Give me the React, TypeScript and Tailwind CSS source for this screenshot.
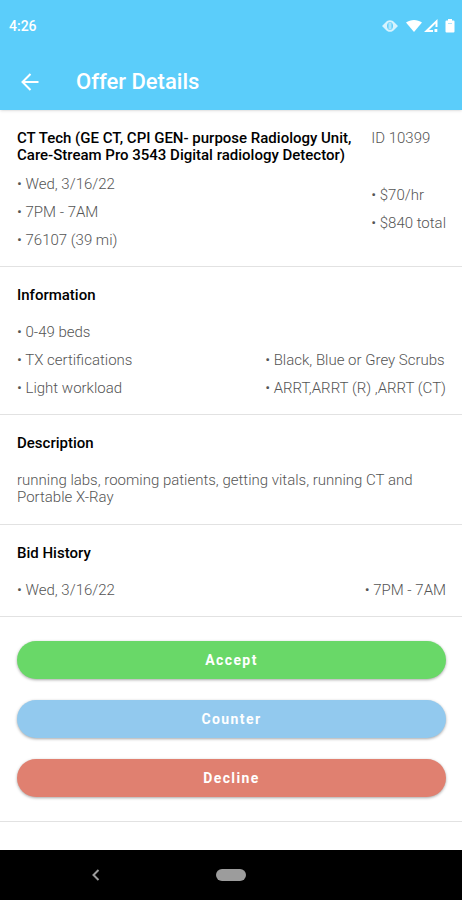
import type { ReactNode } from 'react';
import clsx from 'clsx';

const actions = [
  { label: 'Accept', color: 'bg-[#69d868]' },
  { label: 'Counter', color: 'bg-[#92c9ee]' },
  { label: 'Decline', color: 'bg-[#e08070]' },
];

function BulletList({ items, className }: { items: string[]; className?: string }) {
  return (
    <ul className={clsx('leading-7', className)}>
      {items.map((item) => (
        <li key={item}>• {item}</li>
      ))}
    </ul>
  );
}

function Section({ title, children }: { title: string; children: ReactNode }) {
  return (
    <section className="border-b border-[#e2e2e2] pt-5 pr-4 pb-3 pl-[17px]">
      <h2 className="mb-3.5 font-medium text-black">{title}</h2>
      {children}
    </section>
  );
}

function StatusBar() {
  return (
    <div className="flex items-center justify-between pt-4 pr-1.5 pl-[9px]">
      <span className="text-sm font-medium">4:26</span>
      <div className="flex items-center">
        <svg className="mr-2 h-4 w-4" viewBox="0 0 16 16" fill="currentColor" aria-hidden="true">
          <path
            fillRule="evenodd"
            d="M0 8l3.500-3.500C4.800 3 6.200 2.200 8 2.200s3.200.8 4.500 2.300L16 8l-3.500 3.500C11.200 13 9.800 13.800 8 13.800s-3.200-.8-4.500-2.300zM8 4C6 4 5 5.800 5 8s1 4 3 4 3-1.800 3-4-1-4-3-4z"
            opacity=".75"
          />
          <path d="M6.500 4.500h3v7h-3z" opacity=".5" />
        </svg>
        <svg className="mr-0.5 h-4 w-4" viewBox="0 0 16 16" fill="currentColor" aria-hidden="true">
          <path d="M0 4.500C4.600 1 11.400 1 16 4.500L8 14z" />
        </svg>
        <svg className="mr-1.5 h-4 w-3.5" viewBox="0 0 14 16" fill="currentColor" aria-hidden="true">
          <path fillRule="evenodd" d="M13.500 1v8h-2V5.500L5 12h4v2H0zM10.500 11h2.800v3h-2.800z" />
        </svg>
        <svg className="h-4 w-3" viewBox="0 0 12 16" fill="currentColor" aria-hidden="true">
          <path d="M4 1h4v1.500h1.500q1 0 1 1v10q0 1-1 1h-7q-1 0-1-1v-10q0-1 1-1H4z" />
          <path d="M4 5h4v1H4z" fill="#5bcdfa" opacity=".5" />
        </svg>
      </div>
    </div>
  );
}

export default function App() {
  return (
    <div className="flex min-h-screen flex-col bg-white font-['Roboto',sans-serif] text-[15px] leading-[17px] font-light text-[#555555]">
      <header className="bg-[#5bcdfa] pb-3 text-white shadow-sm">
        <StatusBar />
        <div className="mt-[30px] flex items-center px-4">
          <button type="button" aria-label="Back" className="flex h-8 w-7 items-center justify-center">
            <svg className="h-[18px] w-[18px]" viewBox="0 0 18 18" fill="none" stroke="currentColor" strokeWidth="2" aria-hidden="true">
              <path d="M17.500 9H2M9.500 1L1.500 9l8 8" />
            </svg>
          </button>
          <h1 className="ml-8 text-[22px] leading-8 font-medium">Offer Details</h1>
        </div>
      </header>

      <main className="flex-1">
        <section className="flex justify-between gap-4 border-b border-[#e2e2e2] pt-5 pr-4 pb-3 pl-[17px]">
          <div className="flex-1">
            <h2 className="mb-1.5 font-medium text-black">
              CT Tech (GE CT, CPI GEN- purpose Radiology Unit, Care-Stream Pro 3543 Digital radiology Detector)
            </h2>
            <BulletList items={['Wed, 3/16/22', '7PM - 7AM', '76107 (39 mi)']} />
          </div>
          <div className="shrink-0">
            <p className="mb-[34px]">ID 10399</p>
            <BulletList items={['$70/hr', '$840 total']} />
          </div>
        </section>

        <Section title="Information">
          <div className="flex items-end justify-between">
            <BulletList items={['0-49 beds', 'TX certifications', 'Light workload']} />
            <BulletList items={['Black, Blue or Grey Scrubs', 'ARRT,ARRT (R) ,ARRT (CT)']} />
          </div>
        </Section>

        <Section title="Description">
          <p className="py-1.5">running labs, rooming patients, getting vitals, running CT and Portable X-Ray</p>
        </Section>

        <Section title="Bid History">
          <div className="flex justify-between">
            <BulletList items={['Wed, 3/16/22']} />
            <BulletList items={['7PM - 7AM']} />
          </div>
        </Section>

        <div className="flex flex-col gap-[21px] border-b border-[#e2e2e2] py-6 pr-4 pl-[17px]">
          {actions.map(({ label, color }) => (
            <button
              key={label}
              type="button"
              className={clsx('h-[38px] rounded-full text-sm font-bold tracking-widest text-white shadow-[0_1px_3px_rgba(0,0,0,0.35)]', color)}
            >
              {label}
            </button>
          ))}
        </div>
      </main>

      <nav className="grid h-[50px] grid-cols-5 items-center justify-items-center bg-black text-[#9c9c9c]">
        <button type="button" aria-label="System back" className="col-start-2 justify-self-start">
          <svg className="h-3 w-2" viewBox="0 0 8 12" fill="none" stroke="currentColor" strokeWidth="2" aria-hidden="true">
            <path d="M6.500 1L1.500 6l5 5" />
          </svg>
        </button>
        <button type="button" aria-label="Home" className="h-3 w-[30px] rounded-full bg-[#9c9c9c]" />
      </nav>
    </div>
  );
}
